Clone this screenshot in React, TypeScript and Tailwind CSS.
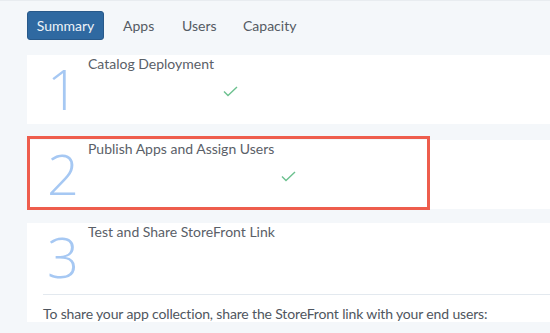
import React from "react";

const tabs = [
  { label: "Apps", w: "w-[59px]" },
  { label: "Users", w: "w-[61px]" },
  { label: "Capacity", w: "w-[60px]" },
];

function Tick({ offset }: { offset: number }) {
  return (
    <svg
      width="15"
      height="11"
      viewBox="0 0 15 11"
      className="mt-[14px]"
      style={{ marginLeft: offset }}
    >
      <polyline
        points="1,5.5 5,9.5 14,1"
        fill="none"
        stroke="#6cc18f"
        strokeWidth="1.4"
      />
    </svg>
  );
}

function StepCard({
  num,
  title,
  tick,
}: {
  num: string;
  title: string;
  tick?: number;
}) {
  return (
    <div className="flex h-[69px] bg-white">
      <div className="w-[61px] pl-[20px] pt-[5px] text-[56px] leading-none font-light text-[#a6c8f3] font-['Open_Sans',sans-serif]">
        {num}
      </div>
      <div className="flex flex-col">
        <p className="text-[14px] leading-[17px] text-[#5a6068]">{title}</p>
        {tick !== undefined && <Tick offset={tick} />}
      </div>
    </div>
  );
}

export default function App() {
  return (
    <div className="relative w-[550px] h-[333px] overflow-hidden bg-[#f4f7fa] border-t border-[#e8ecf0] font-['Lato',sans-serif]">
      {/* tabs */}
      <div className="flex items-center pl-[27px] pt-[10px]">
        <button className="h-[29px] w-[77px] mr-[19px] rounded-[3px] bg-[#2f69a1] border border-[#28598a] text-[14px] text-[#eef3f8]">
          Summary
        </button>
        {tabs.map((t) => (
          <span key={t.label} className={`${t.w} text-[14px] text-[#555b63]`}>
            {t.label}
          </span>
        ))}
      </div>

      <div className="flex flex-col pl-[27px] pt-[15px]">
        <StepCard num="1" title="Catalog Deployment" tick={135} />
        <div className="h-[16px]" />
        <StepCard num="2" title="Publish Apps and Assign Users" tick={193} />
        <div className="h-[14px]" />
        <div className="bg-white">
          <div className="flex h-[71px]">
            <div className="w-[61px] pl-[20px] pt-[5px] text-[56px] leading-none font-light text-[#a6c8f3] font-['Open_Sans',sans-serif]">
              3
            </div>
            <p className="text-[14px] leading-[17px] text-[#5a6068]">
              Test and Share StoreFront Link
            </p>
          </div>
          <div className="ml-[16px] border-t border-[#e3e9ef] pt-[10px]">
            <p className="text-[14px] leading-[17px] tracking-[-0.15px] text-[#4f5660]">
              To share your app collection, share the StoreFront link with your end users:
            </p>
          </div>
        </div>
      </div>

      {/* annotation highlight */}
      <div className="absolute left-[27px] top-[135px] w-[403px] h-[74px] border-[3px] border-[#ee5d4d] pointer-events-none" />
    </div>
  );
}
